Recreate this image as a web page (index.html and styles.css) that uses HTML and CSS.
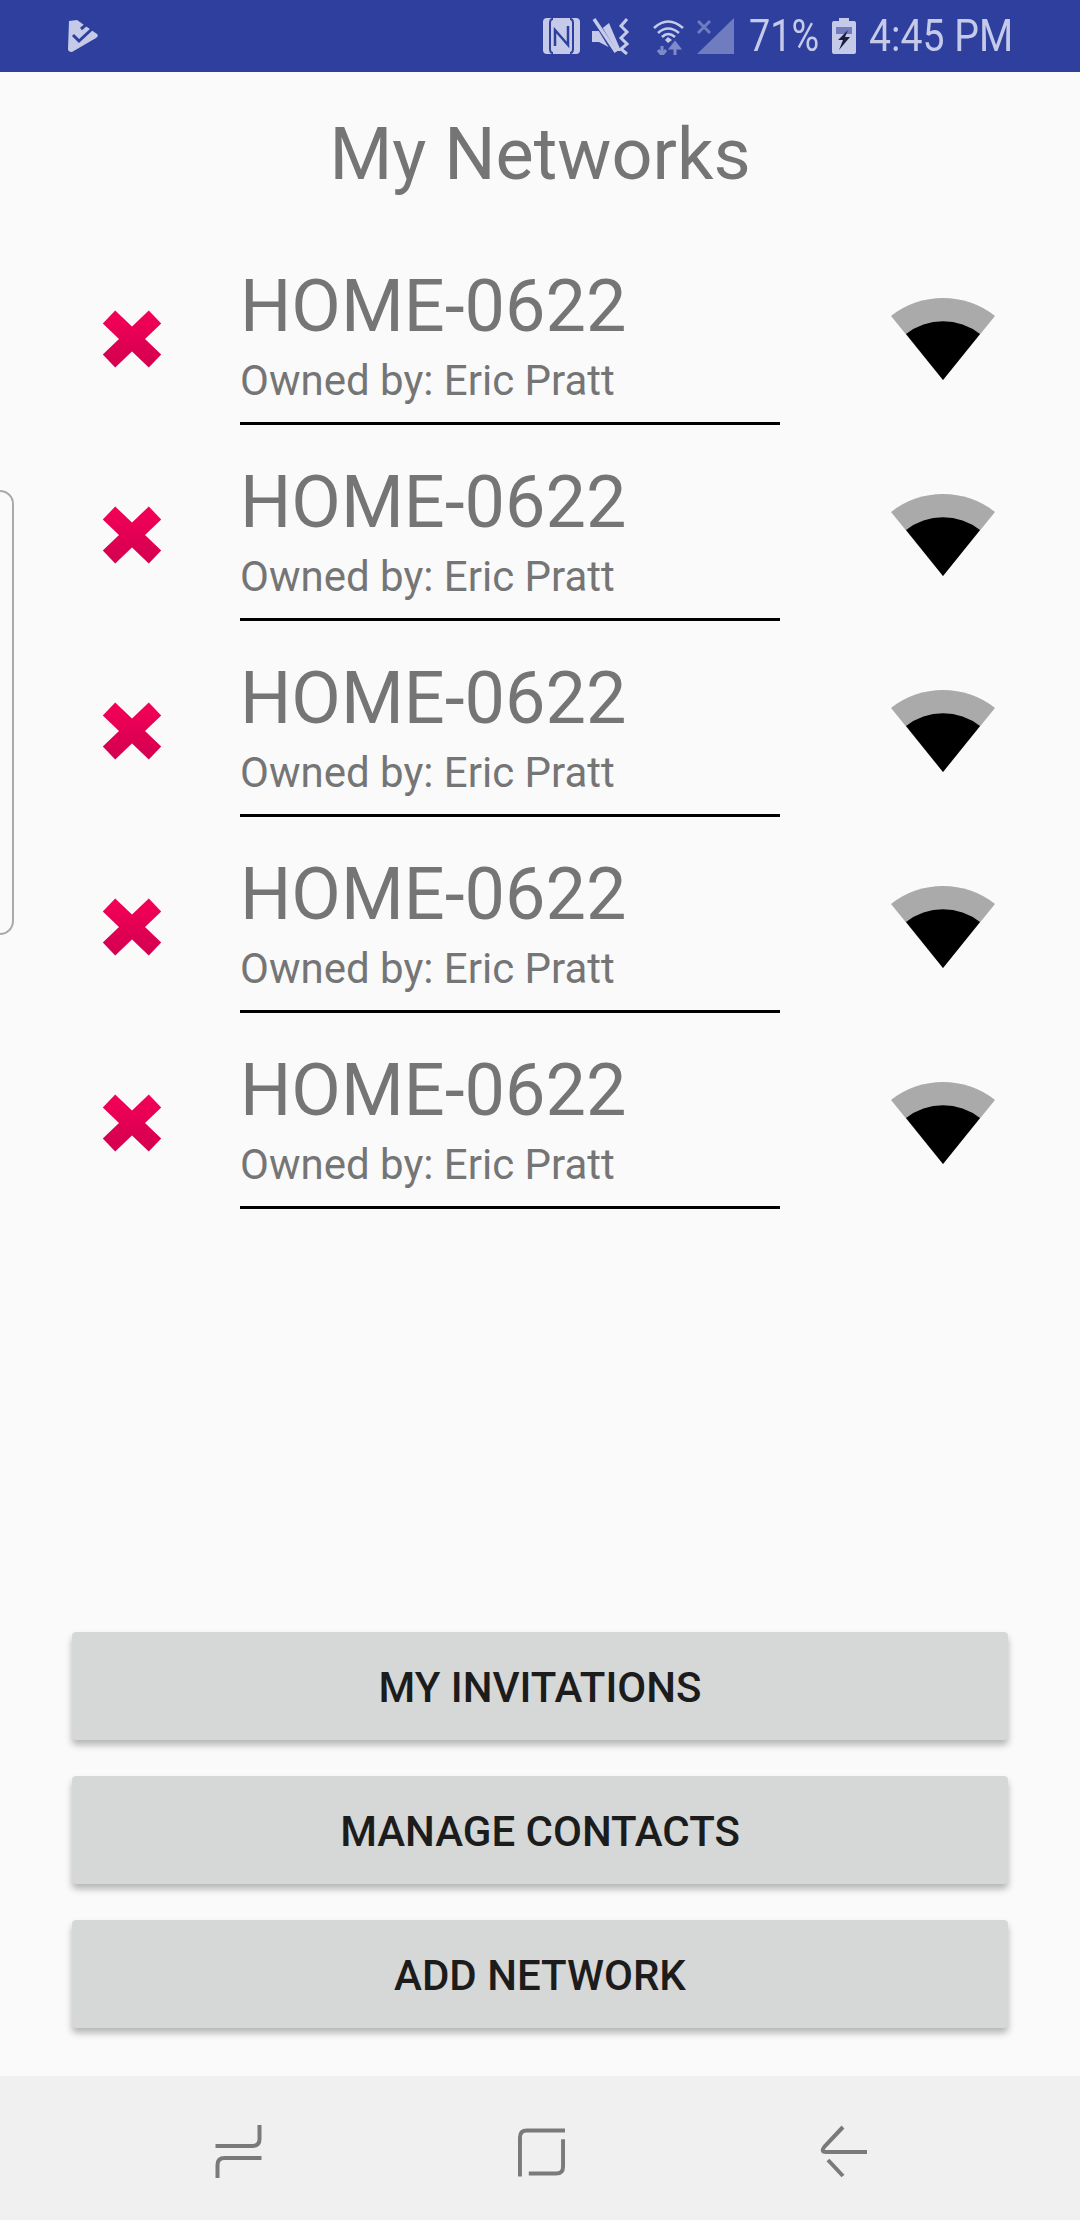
FILE: index.html
```html
<!DOCTYPE html>
<html lang="en">
<head>
    <meta charset="UTF-8">
    <title>My Networks</title>
    <link rel="stylesheet" href="styles.css">
</head>
<body>

<svg class="defs" width="0" height="0">
    <defs>
        <linearGradient id="crossFill" gradientUnits="userSpaceOnUse" x1="0" y1="0" x2="0" y2="58">
            <stop offset="0" stop-color="#f50057"/>
            <stop offset="1" stop-color="#d20050"/>
        </linearGradient>
        <symbol id="cross" viewBox="0 0 60 58">
            <path d="M7 7 L53 51 M53 7 L7 51" fill="none" stroke="url(#crossFill)" stroke-width="18"/>
        </symbol>
        <symbol id="signal" viewBox="0 0 106 85">
            <path d="M1 19 A84 84 0 0 1 105 19 L53 83 Z" fill="#aaaaaa"/>
            <path d="M16 37 A60 60 0 0 1 90 37 L53 83 Z" fill="#000"/>
        </symbol>
    </defs>
</svg>

<div class="status-bar">
    <svg class="st-app" viewBox="0 0 30 32">
        <path d="M1 1 L9 0 L29 14 Q31 16 28 18 L4 32 Q0 32 0 29 Z" fill="#c5cae9"/>
        <path d="M5 15 L11 21 L24 9 M13 9 L19 4 L25 -2" fill="none" stroke="#2e3f9e" stroke-width="3"/>
    </svg>
    <div class="status-right">
        <svg class="st-nfc" viewBox="0 0 37 36">
            <rect width="37" height="36" rx="4" fill="#c5cae9"/>
            <path d="M10 1 Q7 1 7 5 V31 Q7 35 10 35 M27 1 Q30 1 30 5 V31 Q30 35 27 35" stroke="#2e3f9e" stroke-width="2" fill="none"/>
            <path d="M12 28 V12 L25 27 V8" stroke="#2e3f9e" stroke-width="2.5" fill="none"/>
        </svg>
        <svg class="st-mute" viewBox="0 0 39 38">
            <path d="M0 14 H7 L17 6 L29 34 H24 L7 25 H0 Z" fill="#c5cae9"/>
            <path d="M3 3 L23 36" stroke="#2e3f9e" stroke-width="5" fill="none"/>
            <path d="M2 2 L24 35" stroke="#c5cae9" stroke-width="3.5" fill="none"/>
            <path d="M35 2 L29 9 L35 15 L29 21 L35 27 L29 32 L35 37" stroke="#c5cae9" stroke-width="3" fill="none"/>
        </svg>
        <svg class="st-wifi" viewBox="0 0 31 37">
            <path d="M1 10 Q15 -3 30 10 M5 15 Q15 6 26 15 M9 19 Q15 13 22 19" stroke="#c5cae9" stroke-width="2.6" fill="none"/>
            <path d="M12 22 L15 19 L19 22 L15 25 Z" fill="#c5cae9"/>
            <path d="M9 37 V28 M5 32 L9 37 L13 32 M22 37 V26 M18 30 H26 L22 25 Z" stroke="#7f8bc9" stroke-width="3" fill="none"/>
        </svg>
        <svg class="st-bars" viewBox="0 0 37 36">
            <path d="M37 0 V36 H0 Z" fill="#6f7cc0"/>
            <path d="M1 3 L13 15 M13 3 L1 15" stroke="#6f7cc0" stroke-width="3" fill="none"/>
        </svg>
        <span class="st-text st-pct">71%</span>
        <svg class="st-batt" viewBox="0 0 24 36">
            <path d="M7 0 H17 V3 H22 Q24 3 24 5 V34 Q24 36 22 36 H2 Q0 36 0 34 V5 Q0 3 2 3 H7 Z" fill="#c5cae9"/>
            <rect x="4" y="9" width="16" height="7" fill="#6f7cc0"/>
            <path d="M16 12 L6 22 H11 L7 32 L18 19 H13 Z" fill="#1a1f3d"/>
        </svg>
        <span class="st-text st-time">4:45 PM</span>
    </div>
</div>

<div class="side-handle"></div>

<h1 class="title">My Networks</h1>

<div class="network-list">
    <div class="network">
        <svg class="icon-remove"><use href="#cross"/></svg>
        <div class="network-info">
            <div class="network-name">HOME-0622</div>
            <div class="network-owner">Owned by: Eric Pratt</div>
        </div>
        <svg class="icon-signal"><use href="#signal"/></svg>
    </div>
    <div class="network">
        <svg class="icon-remove"><use href="#cross"/></svg>
        <div class="network-info">
            <div class="network-name">HOME-0622</div>
            <div class="network-owner">Owned by: Eric Pratt</div>
        </div>
        <svg class="icon-signal"><use href="#signal"/></svg>
    </div>
    <div class="network">
        <svg class="icon-remove"><use href="#cross"/></svg>
        <div class="network-info">
            <div class="network-name">HOME-0622</div>
            <div class="network-owner">Owned by: Eric Pratt</div>
        </div>
        <svg class="icon-signal"><use href="#signal"/></svg>
    </div>
    <div class="network">
        <svg class="icon-remove"><use href="#cross"/></svg>
        <div class="network-info">
            <div class="network-name">HOME-0622</div>
            <div class="network-owner">Owned by: Eric Pratt</div>
        </div>
        <svg class="icon-signal"><use href="#signal"/></svg>
    </div>
    <div class="network">
        <svg class="icon-remove"><use href="#cross"/></svg>
        <div class="network-info">
            <div class="network-name">HOME-0622</div>
            <div class="network-owner">Owned by: Eric Pratt</div>
        </div>
        <svg class="icon-signal"><use href="#signal"/></svg>
    </div>
</div>

<div class="actions">
    <button class="action">MY INVITATIONS</button>
    <button class="action">MANAGE CONTACTS</button>
    <button class="action">ADD NETWORK</button>
</div>

<div class="nav-bar">
    <svg class="nav-icon" viewBox="0 0 46 53">
        <path d="M44 0 V14 Q44 21 37 21 H0 M2 53 V40 Q2 33 9 33 H46" fill="none" stroke="#7a7a7a" stroke-width="4"/>
    </svg>
    <svg class="nav-icon" viewBox="0 0 48 53">
        <path d="M48 5 H9 Q2 5 2 12 V52 M46 14 V42 Q46 49 39 49 H11" fill="none" stroke="#7a7a7a" stroke-width="4"/>
    </svg>
    <svg class="nav-icon" viewBox="0 0 47 53">
        <path d="M23 2 L5 21 Q0 27 6 27 H47 M8 35 L23 51" fill="none" stroke="#7a7a7a" stroke-width="4"/>
    </svg>
</div>

</body>
</html>
```

FILE: styles.css
```css
html, body {
    margin: 0;
    padding: 0;
}
body {
    width: 1080px;
    height: 2220px;
    display: flex;
    flex-direction: column;
    position: relative;
    overflow: hidden;
    background-color: #fafafa;
    font-family: Roboto, sans-serif;
}
.defs {
    position: absolute;
}

/* status bar */
.status-bar {
    flex: none;
    height: 72px;
    display: flex;
    align-items: center;
    justify-content: space-between;
    padding: 0 68px 0 68px;
    background-color: #2e3f9e;
    color: #c5cae9;
}
.status-right {
    display: flex;
    align-items: center;
}
.st-app {
    width: 30px;
    height: 32px;
}
.st-nfc {
    width: 37px;
    height: 36px;
}
.st-mute {
    width: 39px;
    height: 38px;
    margin-left: 12px;
}
.st-wifi {
    width: 31px;
    height: 37px;
    margin-left: 22px;
}
.st-bars {
    width: 37px;
    height: 36px;
    margin-left: 13px;
}
.st-batt {
    width: 24px;
    height: 36px;
    margin-left: 13px;
}
.st-text {
    display: block;
    font-size: 45px;
    line-height: 74px;
    white-space: nowrap;
    transform-origin: left center;
}
.st-pct {
    width: 70px;
    margin-left: 15px;
    transform: scaleX(0.84);
}
.st-time {
    width: 143px;
    margin-left: 13px;
    transform: scaleX(0.87);
}

/* tab peeking in from the left edge */
.side-handle {
    position: absolute;
    left: -20px;
    top: 490px;
    width: 30px;
    height: 441px;
    border: 2px solid #aaaaaa;
    border-radius: 14px;
}

.title {
    margin: 0;
    height: 157px;
    box-sizing: border-box;
    padding-top: 25px;
    font-size: 72px;
    line-height: 116px;
    font-weight: 400;
    text-align: center;
    color: #757575;
}

/* network rows */
.network {
    height: 196px;
    box-sizing: border-box;
    padding-left: 102px;
    display: flex;
    align-items: center;
}
.icon-remove {
    flex: none;
    width: 60px;
    height: 58px;
    margin: 24px 78px 0 0;
    filter: blur(0.7px);
}
.network-info {
    width: 540px;
    height: 196px;
    box-sizing: border-box;
    padding-top: 36px;
    border-bottom: 3px solid #000;
}
.network-name {
    font-size: 72px;
    line-height: 84px;
    color: #757575;
}
.network-owner {
    font-size: 42px;
    line-height: 48px;
    margin-top: 8px;
    color: #757575;
}
.icon-signal {
    flex: none;
    width: 106px;
    height: 85px;
    margin: 24px 0 0 110px;
    filter: blur(0.7px);
}

/* bottom buttons */
.actions {
    margin-top: auto;
    padding: 0 72px 48px;
    display: flex;
    flex-direction: column;
    gap: 36px;
}
.action {
    height: 108px;
    padding-top: 3px;
    border: none;
    border-radius: 4px;
    background-color: #d6d7d7;
    box-shadow: 0 5px 7px rgba(0, 0, 0, 0.28);
    font-family: Roboto, sans-serif;
    font-size: 42px;
    font-weight: 500;
    color: #1c1c1c;
}

.nav-bar {
    flex: none;
    height: 144px;
    box-sizing: border-box;
    padding: 49px 213px 0 215px;
    display: flex;
    justify-content: space-between;
    align-items: flex-start;
    background-color: #f0f0f0;
}
.nav-icon {
    height: 53px;
    width: 47px;
}
```
